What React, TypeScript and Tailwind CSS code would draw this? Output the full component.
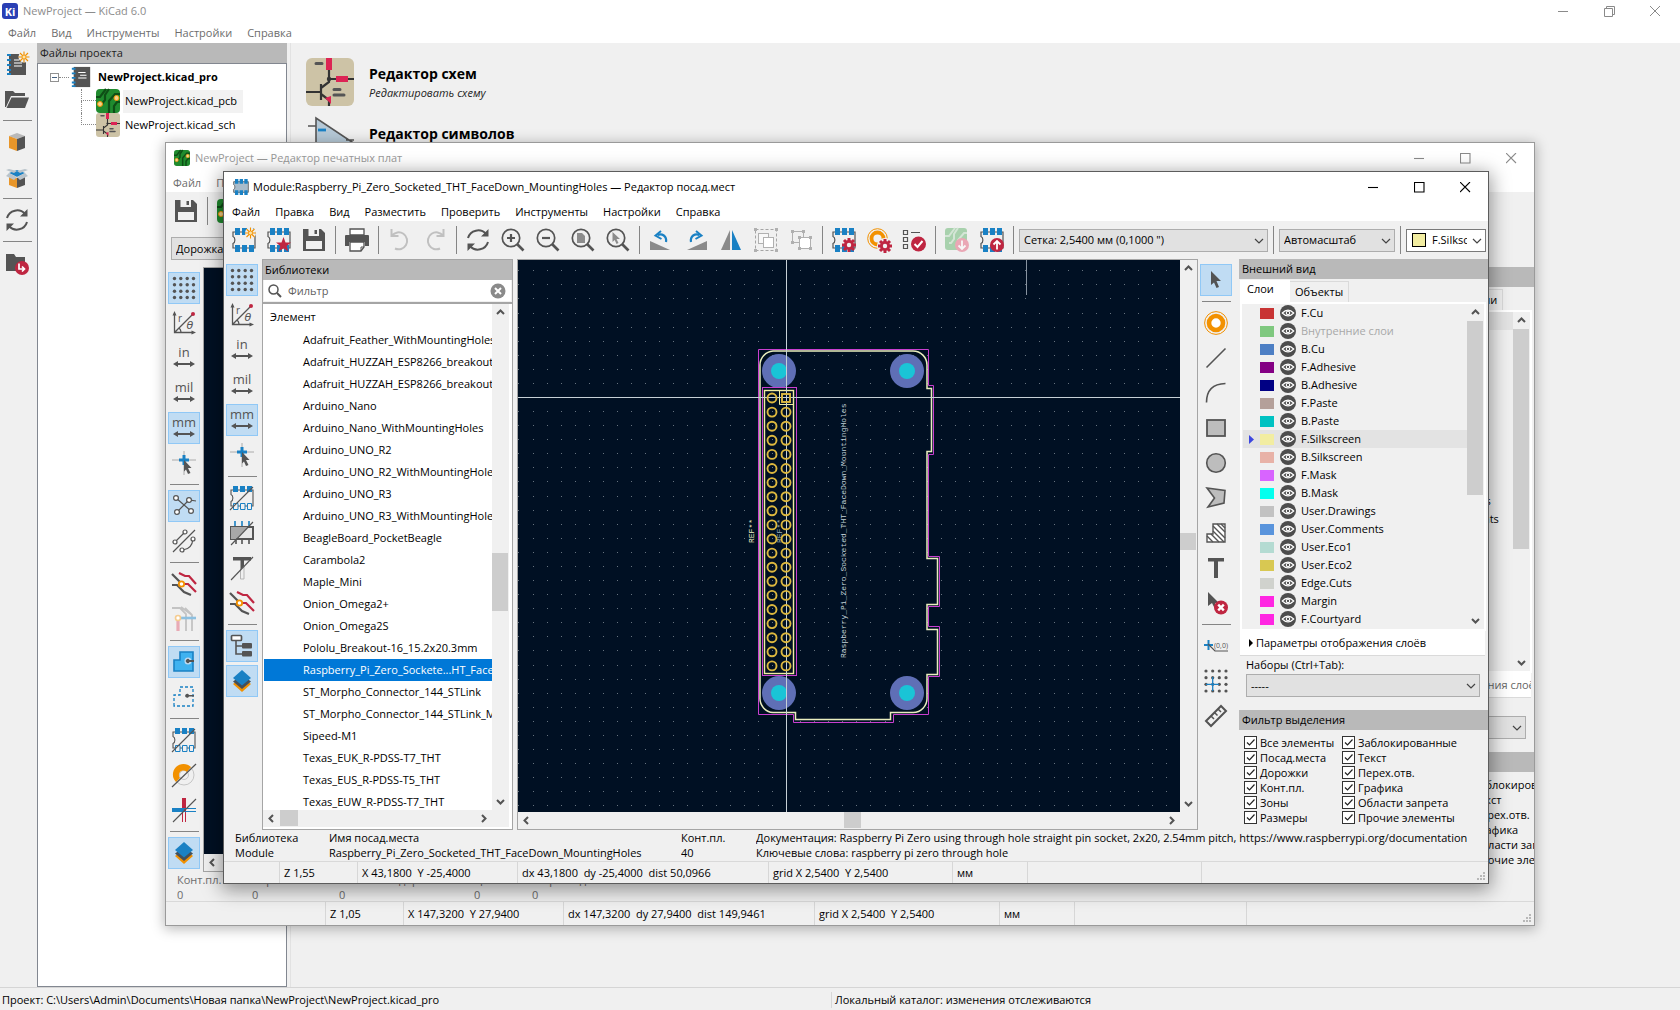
import { useId, type ReactNode } from 'react';

const D = '#545454';
const B = '#1a81c4';
const R = '#bf2641';
const O = '#f29100';

/* ---------- icons ---------- */

function Ico({ children, size = 24 }: { children: ReactNode; size?: number }) {
  return (
    <svg width={size} height={size} viewBox="0 0 24 24" fill="none" className="shrink-0 overflow-visible" aria-hidden="true">
      {children}
    </svg>
  );
}

function Pads({ body = 'none' }: { body?: string }) {
  return (
    <>
      <path d="M1 4V8.500C3.500 9.500 3.500 14.500 1 15.500V20H23V4Z" fill={body} stroke={D} strokeWidth="1.2" />
      <path d="M3 0h5v7h-5zM10 0h5v7h-5zM17 0h5v7h-5zM3 17h5v7h-5zM10 17h5v7h-5zM17 17h5v7h-5z" fill={B} />
    </>
  );
}

function Gear({ x, y }: { x: number; y: number }) {
  return (
    <g transform={`translate(${x} ${y})`}>
      <path d="M0-7V7M-7 0H7M-5-5L5 5M5-5L-5 5" stroke={R} strokeWidth="3" />
      <circle r="5" fill={R} />
      <circle r="2.200" fill="#f0f0f0" />
    </g>
  );
}

function Spark({ x, y }: { x: number; y: number }) {
  return (
    <g transform={`translate(${x} ${y})`}>
      <circle r="5.500" fill="#f0f0f0" />
      <path d="M0-5.500V5.500M-5.500 0H5.500M-4-4L4 4M4-4L-4 4" stroke={O} strokeWidth="1.100" />
      <circle r="2" fill="#fbe3a8" stroke={O} strokeWidth=".8" />
    </g>
  );
}

const KiLogo = () => (
  <span className="flex h-4 w-4 items-center justify-center rounded-[3px] bg-[#2a3fb4] text-[11px] font-bold leading-none text-white">Ki</span>
);

const PcbArt = ({ size = 24 }: { size?: number }) => (
  <Ico size={size}>
    <rect width="24" height="24" rx="4" fill="#208b2e" />
    <path d="M0 8H4L10 0M24 5H19L13 12V24M24 13H21L18 17V24M4 15H6L9 11V6L13 0" stroke="#0e4f16" strokeWidth="2.200" />
    <circle cx="4" cy="15" r="2.500" fill="#f5d48c" stroke={O} />
    <circle cx="20.500" cy="9" r="2.500" fill="#f5d48c" stroke={O} />
  </Ico>
);

const SchArt = ({ size = 24 }: { size?: number }) => (
  <Ico size={size}>
    <rect width="24" height="24" rx="3" fill="#cdc3a6" />
    <path d="M11.500 6V12L7.500 15M0 17H7M7.500 13V21M7.500 18L11.500 21V24M11.500 10.500H24" stroke="#333" strokeWidth="1.100" />
    <circle cx="11.500" cy="10.500" r="1.100" fill="#333" />
    <path d="M10 0h3v6h-3zM15 9h6v3h-6z" fill="#dc2454" />
    <path d="M9.500 20l3-1v4z" fill="#dc2454" />
    <path d="M5 2.800h3M14 15.800h3M14 18.500h5" stroke="#555" strokeWidth="1.500" strokeLinecap="round" />
  </Ico>
);

const SymArt = () => (
  <Ico size={48}>
    <path d="M1 4H5M5 0V24L23 12ZM20 11H24" stroke={D} fill="#b5c8d6" strokeWidth=".8" />
    <path d="M6 6H10" stroke={B} strokeWidth="1.400" />
  </Ico>
);

const Notebook = ({ size = 24 }: { size?: number }) => (
  <Ico size={size}>
    <rect x="4" y="1" width="18" height="22" fill={D} />
    <path d="M9 7H17M11 10H18M9 13H18" stroke="#fff" strokeWidth="1.100" />
    <path d="M2 3H6M2 8H6M2 13H6M2 18H6M2 22H6" stroke={B} strokeWidth="2" />
  </Ico>
);

const I: Record<string, ReactNode> = {
  newProject: (
    <>
      <rect x="4" y="2" width="17" height="21" fill={D} />
      <path d="M9 8H14M9 11H17M9 14H17" stroke="#fff" strokeWidth="1.100" />
      <path d="M2 3H6M2 8H6M2 13H6M2 18H6M2 22H6" stroke={B} strokeWidth="2" />
      <Spark x={19} y={5} />
    </>
  ),
  open: (
    <>
      <path d="M0 20V4H8L10 6H20V9H6L1 20Z" fill={D} />
      <path d="M1.500 21L6.500 10.500H24L20 21Z" fill={D} />
    </>
  ),
  box: (
    <>
      <path d="M12 3L20 6L12 9L4 6Z" fill="#b9b9b9" />
      <path d="M4 6L12 9V21L4 18Z" fill="#e8962a" />
      <path d="M20 6L12 9V21L20 18Z" fill={D} />
    </>
  ),
  openBox: (
    <>
      <path d="M4 10L12 13V23L4 20Z" fill="#e8962a" />
      <path d="M20 10L12 13V23L20 20Z" fill={D} />
      <path d="M12 5L20 8L12 12L4 8Z" fill={B} />
      <path d="M4 4L12 6L9 8L1 5ZM20 4L12 6L15 8L23 5ZM4 8L12 12L9 15L1 11ZM20 8L12 12L15 15L23 11Z" fill="#b9c3ca" />
    </>
  ),
  refresh: (
    <>
      <path d="M2 10A10.500 10.500 0 0 1 20 6M22 14A10.500 10.500 0 0 1 4 18" stroke={D} strokeWidth="2" />
      <path d="M22.500 1V8.500H15ZM1.500 23V15.500H9Z" fill={D} />
    </>
  ),
  folderRed: (
    <>
      <path d="M1 3H9L11 6H20V20H1Z" fill={D} />
      <circle cx="17" cy="17" r="7" fill={R} />
      <path d="M14 12.500V18H19M17 15.500L19.500 18L17 20.500" stroke="#fff" strokeWidth="1.700" />
    </>
  ),
  save: (
    <>
      <path d="M1 1H19L23 5V23H1Z" fill={D} />
      <path d="M6.500 1H17V8H6.500ZM4 13H20V21H4Z" fill="#f0f0f0" />
      <path d="M12.500 2H15V6H12.500Z" fill={D} />
    </>
  ),
  newFp: (<><Pads /><Spark x={18.500} y={5} /></>),
  starFp: (
    <>
      <Pads />
      <path d="M16.500 9L18.500 14.500H24L19.700 18L21.300 23.500L16.500 20.200L11.700 23.500L13.300 18L9 14.500H14.500Z" fill={R} />
    </>
  ),
  print: (
    <>
      <path d="M5 1H19V7H5Z" stroke={D} fill="#fff" strokeWidth="1.300" />
      <path d="M1 7H23Q24 7 24 8V18H20V14H4V18H0V8Q0 7 1 7Z" fill={D} />
      <path d="M5 14H19V19L16 23H5Z" stroke={D} fill="#fff" strokeWidth="1.300" />
      <path d="M19 19H16V23" stroke={D} />
    </>
  ),
  undo: (<path d="M3.500 1V8H10.500M4 7.500A8.500 8.500 0 1 1 7 20.500" stroke="#c0c0c0" strokeWidth="2" />),
  redo: (<path d="M20.500 1V8H13.500M20 7.500A8.500 8.500 0 1 0 17 20.500" stroke="#c0c0c0" strokeWidth="2" />),
  zoomIn: (
    <>
      <circle cx="10" cy="10" r="8.700" stroke={D} strokeWidth="1.700" />
      <path d="M16 16L22.500 22.500" stroke={D} strokeWidth="2.600" />
      <path d="M10 6V14M6 10H14" stroke={D} strokeWidth="2.200" />
    </>
  ),
  zoomOut: (
    <>
      <circle cx="10" cy="10" r="8.700" stroke={D} strokeWidth="1.700" />
      <path d="M16 16L22.500 22.500" stroke={D} strokeWidth="2.600" />
      <path d="M6 10H14" stroke={D} strokeWidth="2.200" />
    </>
  ),
  zoomPage: (
    <>
      <circle cx="10" cy="10" r="8.700" stroke={D} strokeWidth="1.700" />
      <path d="M16 16L22.500 22.500" stroke={D} strokeWidth="2.600" />
      <path d="M6 5H11L14 8V15H6Z" fill="#8c8c8c" />
    </>
  ),
  zoomSel: (
    <>
      <circle cx="10" cy="10" r="8.700" stroke={D} strokeWidth="1.700" />
      <path d="M16 16L22.500 22.500" stroke={D} strokeWidth="2.600" />
      <path d="M6.500 4L14 11H10.500L12.500 15L10.500 16L8.700 12L6.500 14Z" fill="#8c8c8c" />
    </>
  ),
  rotL: (
    <>
      <path d="M1 13V22H21Z" fill="#8a8a8a" />
      <path d="M17 14C18 8 13 5 8.500 7" stroke={B} strokeWidth="2.200" />
      <path d="M12 3L6.500 7.500L12.500 11" stroke={B} strokeWidth="2" />
    </>
  ),
  rotR: (
    <>
      <path d="M23 13V22H3Z" fill="#8a8a8a" />
      <path d="M7 14C6 8 11 5 15.500 7" stroke={B} strokeWidth="2.200" />
      <path d="M12 3L17.500 7.500L11.500 11" stroke={B} strokeWidth="2" />
    </>
  ),
  mirror: (<><path d="M11 2V22H2Z" fill="#8a8a8a" /><path d="M13 2V22H22Z" fill={B} /></>),
  group: (
    <>
      <rect x="1.500" y="1.500" width="21" height="21" stroke="#a5a5a5" strokeDasharray="3 2" />
      <path d="M0 0h3v3h-3zM21 0h3v3h-3zM0 21h3v3h-3zM21 21h3v3h-3z" fill="#b0b0b0" />
      <rect x="4.500" y="5.500" width="10" height="10" fill="#f8f8f8" stroke="#b0b0b0" />
      <rect x="9.500" y="9.500" width="10" height="10" fill="#fff" stroke="#b0b0b0" />
    </>
  ),
  ungroup: (
    <>
      <rect x="3.500" y="3.500" width="11" height="11" stroke="#b0b0b0" />
      <rect x="10.500" y="9.500" width="11" height="11" fill="#fff" stroke="#b0b0b0" />
      <path d="M2 2h3v3h-3zM13 2h3v3h-3zM2 13h3v3h-3zM9 8h3v3h-3zM20 8h3v3h-3zM9 19h3v3h-3zM20 19h3v3h-3z" fill="#b0b0b0" />
    </>
  ),
  fpGear: (<><Pads /><Gear x={17} y={17} /></>),
  padGear: (
    <>
      <circle cx="10.500" cy="10.500" r="9.800" stroke={O} strokeWidth="1" />
      <circle cx="10.500" cy="10.500" r="6" stroke={O} strokeWidth="3.800" />
      <circle cx="18" cy="18" r="8" fill="#f0f0f0" />
      <Gear x={18} y={18} />
    </>
  ),
  check: (
    <>
      <path d="M1.500 2.500h4v4h-4zM1.500 9.500h4v4h-4zM1.500 16.500h4v4h-4zM9 4.500H18" stroke={D} strokeWidth="1.200" />
      <circle cx="16.500" cy="16" r="7.500" fill={R} />
      <path d="M12.500 16L15.500 19L20.500 13" stroke="#fff" strokeWidth="2" />
    </>
  ),
  pcbDown: (
    <g opacity=".5">
      <rect width="22" height="22" rx="3" fill="#62b36c" />
      <path d="M0 8H4L10 0M22 5H19L13 12V22M4 15H6L9 11V6L13 0" stroke="#b9dcbd" strokeWidth="2" />
      <circle cx="17" cy="17" r="7" fill="#e5617b" />
      <path d="M17 12.500V20.500M13.500 17.500L17 21L20.500 17.500" stroke="#fff" strokeWidth="1.800" />
    </g>
  ),
  fpUp: (
    <>
      <Pads />
      <circle cx="17" cy="17" r="7" fill={R} />
      <path d="M17 21.500V13.500M13.500 16.500L17 13L20.500 16.500" stroke="#fff" strokeWidth="1.800" />
    </>
  ),
  grid: (
    <>
      {[2.500, 8.800, 15.200, 21.500].flatMap((y) => [2.500, 8.800, 15.200, 21.500].map((x) => <circle key={`${x}-${y}`} cx={x} cy={y} r="1.700" fill={D} />))}
    </>
  ),
  polar: (
    <>
      <path d="M2.500 4V21.500H20M2.500 21.500L20.500 3.500M7 17A6 6 0 0 1 9 21" stroke={D} strokeWidth="1.300" />
      <path d="M2.500 0L4.500 4.500H.5ZM24 21.500L19.500 19.500V23.500Z" fill={D} />
      <circle cx="21" cy="3" r="2" fill={R} />
      <text x="6" y="11" fontSize="10" fill={D} fontFamily="Open Sans, sans-serif">r</text>
      <text x="14.500" y="18" fontSize="11" fontStyle="italic" fill={D} fontFamily="DejaVu Sans, sans-serif">θ</text>
    </>
  ),
  cursor: (
    <>
      <path d="M0 9H24M12 0V24" stroke="#9a9a9a" strokeWidth=".8" />
      <path d="M12 4V14M7 9H17" stroke={B} strokeWidth="3" />
      <path d="M12 9L19.500 17H16L18.500 22L16 23L14 18.500L12 20.500Z" fill={D} />
    </>
  ),
  fpSketch: (
    <>
      <path d="M1 4V8.500C3.500 9.500 3.500 14.500 1 15.500V20H23V4Z" stroke={D} strokeWidth="1.100" />
      <path d="M3 0h5v6h-5zM10 0h5v6h-5zM17 0h5v6h-5z" fill={B} />
      <path d="M3.500 17.500h4.500v6h-4.500zM10.500 17.500h4.500v6h-4.500zM17.500 17.500h4v6h-4z" fill="#f0f0f0" stroke={B} />
      <path d="M0 24L23 1" stroke={D} strokeWidth="1.100" />
    </>
  ),
  chipSketch: (
    <>
      <rect x="1" y="6" width="22" height="12" fill="#e8e8e8" stroke={D} strokeWidth="2" />
      <path d="M1 6H18L6 18H1Z" fill="#a8a8a8" />
      <path d="M5 0V5M12 0V5M19 0V5" stroke={B} strokeWidth="1.600" />
      <path d="M6 18V23M12 18V23M19 18V23" stroke={D} strokeWidth="1.600" />
      <path d="M1 24L23 1" stroke={D} strokeWidth="1.100" />
    </>
  ),
  textSketch: (
    <>
      <path d="M3 1H21V4.500H14V10L10.500 14V4.500H3Z" fill={D} />
      <path d="M10.500 14V23H14V10" stroke="#b5b5b5" />
      <path d="M1 24L23 1" stroke={D} strokeWidth="1.100" />
    </>
  ),
  tracks: (
    <>
      <path d="M7 1L13 4H17L24 12" stroke={R} strokeWidth="2.200" />
      <path d="M11 12H16L24 20" stroke={R} strokeWidth="2.200" />
      <path d="M0 2L8 10M0 13H5L12 20L19 23" stroke={D} strokeWidth="2.200" />
      <circle cx="9.500" cy="12" r="2.700" fill="#fff" stroke={O} strokeWidth="1.800" />
    </>
  ),
  tracksFaded: (
    <>
      <path d="M0 1H8L14 7V24M9 0L20 8V24M13 1L20 8" stroke="#c3c3c3" strokeWidth="1.800" />
      <path d="M6 11V24" stroke="#e8aab5" strokeWidth="3.200" />
      <path d="M6 11H24" stroke="#8dc0e0" strokeWidth="2.600" />
      <circle cx="6" cy="11" r="2.500" fill="#fff" stroke="#f5cc90" strokeWidth="1.600" />
    </>
  ),
  tree: (
    <>
      <path d="M6 7V20H13M6 12H13" stroke={D} strokeWidth="1.600" />
      <rect x="1.500" y="1.500" width="10" height="5" rx="1" fill="#fff" stroke={D} strokeWidth="1.700" />
      <rect x="12" y="9" width="10" height="5.500" rx="1" fill={D} />
      <rect x="12" y="17" width="10" height="5.500" rx="1" fill={D} />
    </>
  ),
  layers: (
    <>
      <path d="M12 8L21 15L12 23L3 15Z" fill={O} />
      <path d="M12 6L21 12.500L12 20L3 12.500Z" fill="#44505a" />
      <path d="M12 1L21 9L12 16.500L3 9Z" fill={B} />
    </>
  ),
  ratsnest: (
    <>
      <path d="M4 4L19 17M5 18L17 6L24 7" stroke={D} strokeWidth="1.200" />
      <g fill="#fff" stroke={D} strokeWidth="1.200">
        <circle cx="4" cy="4" r="2.400" /><circle cx="17" cy="6" r="2.400" /><circle cx="5" cy="18" r="2.400" /><circle cx="19" cy="17" r="2.400" />
      </g>
    </>
  ),
  ratCurved: (
    <>
      <path d="M3 13L13 3M21 10Q20 20 11 21M1 23L23 1" stroke={D} strokeWidth="1.200" />
      <g fill="#fff" stroke={D} strokeWidth="1.200">
        <circle cx="3" cy="13" r="2" /><circle cx="13" cy="3" r="2" /><circle cx="21" cy="10" r="2" /><circle cx="10" cy="21" r="2" />
      </g>
    </>
  ),
  zoneFill: (
    <>
      <path d="M2 21V10H8V2H21V21Z" fill="#3fb2f0" stroke={B} strokeWidth="1.600" />
      <circle cx="16" cy="11" r="3.500" fill="#c0dcf3" />
      <path d="M22 10H17.500A2 2 0 1 0 17.500 12H22Z" fill={D} />
    </>
  ),
  zoneOutline: (
    <>
      <path d="M2 21V10H8V2H21V21Z" stroke={B} strokeWidth="1.300" strokeDasharray="3 2" />
      <path d="M22 10H17A2 2 0 1 0 17 11.500H22Z" fill={D} />
    </>
  ),
  padSketch: (
    <>
      <circle cx="12" cy="12" r="10" stroke="#c6c6c6" /><circle cx="12" cy="12" r="4.500" stroke="#c6c6c6" />
      <path d="M4 19A10.500 10.500 0 1 1 19 4L15 9A4.500 4.500 0 1 0 8 15Z" fill={O} />
      <path d="M0 24L24 1" stroke={D} strokeWidth="1.200" />
    </>
  ),
  crossTracks: (
    <>
      <path d="M12 0V14" stroke={R} strokeWidth="4" /><path d="M10.500 14V24M13.500 12V24" stroke={R} />
      <path d="M0 12H12" stroke={B} strokeWidth="4" /><path d="M12 10.500H24M12 13.500H24" stroke={B} />
      <path d="M1 24L24 1" stroke={D} strokeWidth="1.100" />
    </>
  ),
  arrow: (<path d="M7 3L17 13H12.500L15 19L12.500 20L10 14.500L7 17Z" fill={D} />),
  pad: (
    <>
      <circle cx="12" cy="12" r="11.400" stroke={O} strokeWidth="1" />
      <circle cx="12" cy="12" r="7" fill="#fff" stroke={O} strokeWidth="4.600" />
    </>
  ),
  line: (<path d="M2.500 21.500L21.500 2.500" stroke={D} strokeWidth="1.600" />),
  arc: (<path d="M2.500 21.500Q2.500 3 21.500 2.500" stroke={D} strokeWidth="1.600" />),
  rect: (<rect x="3" y="4" width="18" height="16" fill="#bdbdbd" stroke={D} strokeWidth="1.800" />),
  circle: (<circle cx="12" cy="12" r="9.300" fill="#bdbdbd" stroke={D} strokeWidth="1.600" />),
  poly: (<path d="M3 2L21 4.500L20 17L4 21L10.500 12Z" fill="#bdbdbd" stroke={D} strokeWidth="1.600" />),
  hatch: (
    <>
      <path d="M3 21V13H9V3H21V21Z" fill="#fff" stroke={D} strokeWidth="1.400" />
      <path d="M9 5L21 17M9 10L20 21M13 3L21 11M17 3L21 7M3 15L9 21M7 13L15 21" stroke={D} strokeWidth="1.400" />
    </>
  ),
  text: (<path d="M4 2H20V5.500H14V22H10V5.500H4Z" fill={D} />),
  del: (
    <>
      <path d="M4 1L15 12H11L12.500 18L10 16L8 12L4 15Z" fill={D} />
      <circle cx="17" cy="16.500" r="7" fill={R} />
      <path d="M14.200 13.700L19.800 19.300M19.800 13.700L14.200 19.300" stroke="#fff" strokeWidth="2.400" />
    </>
  ),
  origin: (
    <>
      <path d="M0 11H9M4.500 6V16" stroke={B} strokeWidth="2" />
      <path d="M4 10L11 17H24" stroke={D} strokeWidth="1.200" />
      <text x="10" y="14" fontSize="7" fill={D} fontFamily="Open Sans, sans-serif">(0,0)</text>
    </>
  ),
  gridOrigin: (
    <>
      {[2, 8.700, 15.300, 22].flatMap((y) => [2, 8.700, 15.300, 22].map((x) => <circle key={`${x}-${y}`} cx={x} cy={y} r="1.600" fill={D} />))}
      <path d="M2 15.300H15M8.700 8V22" stroke={B} strokeWidth="1.300" />
    </>
  ),
  ruler: (
    <>
      <path d="M2 17L17 2L22 7L7 22Z" stroke={D} strokeWidth="2" />
      <path d="M7 12L10 15M10.500 8.500L13.500 11.500M14 5L17 8" stroke={D} strokeWidth="1.500" />
    </>
  ),
};

function Unit({ text }: { text: string }) {
  return (
    <Ico>
      <text x="12" y="11" fontSize="13" textAnchor="middle" fill={D} fontFamily="Open Sans, sans-serif">{text}</text>
      <path d="M5 18H19" stroke={D} strokeWidth="2" />
      <path d="M1 18L6 15V21ZM23 18L18 15V21Z" fill={D} />
    </Ico>
  );
}

const Chevron = ({ className = '' }: { className?: string }) => (
  <svg width="10" height="6" viewBox="0 0 10 6" fill="none" className={className} aria-hidden="true">
    <path d="M1 1L5 5L9 1" stroke="#444" strokeWidth="1.200" />
  </svg>
);

/* ---------- shared controls ---------- */

function Tool({ name, active }: { name: string; active?: boolean }) {
  const unit = name.startsWith('u:');
  return (
    <button
      type="button"
      aria-label={unit ? name.slice(2) : name}
      aria-pressed={active}
      className={`flex h-8 w-8 shrink-0 items-center justify-center border ${active ? 'border-[#90c8f6] bg-[#c0dcf3]' : 'border-transparent'}`}
    >
      {unit ? <Unit text={name.slice(2)} /> : name === 'pcb' ? <PcbArt /> : <Ico>{I[name]}</Ico>}
    </button>
  );
}

function VTools({ items, active = [], className = 'pl-0.5' }: { items: string[]; active?: string[]; className?: string }) {
  return (
    <div role="toolbar" aria-orientation="vertical" className={`flex flex-col gap-[3px] pt-[5px] ${className}`}>
      {items.map((n, i) =>
        n === '|' ? (
          <div key={i} className="flex h-[5px] w-8 shrink-0 items-center justify-center"><div className="h-px w-[29px] bg-[#858585]" /></div>
        ) : (
          <Tool key={i} name={n} active={active.includes(n)} />
        ),
      )}
    </div>
  );
}

function HTools({ items }: { items: string[] }) {
  return (
    <>
      {items.map((n, i) =>
        n === '|' ? (
          <div key={i} className="flex h-7 w-[5px] shrink-0 justify-center"><div className="w-px bg-[#858585]" /></div>
        ) : (
          <Tool key={i} name={n} />
        ),
      )}
    </>
  );
}

function Select({ label, value, swatch, className }: { label: string; value: string; swatch?: boolean; className: string }) {
  return (
    <div className={`relative ${className}`}>
      <select
        aria-label={label}
        className={`h-full w-full appearance-none rounded-none border text-black outline-none ${swatch ? 'border-[#7a7a7a] bg-white pl-[25px] pr-[18px]' : 'border-[#adadad] bg-[#e1e1e1] pl-1 pr-5'}`}
      >
        <option>{value}</option>
      </select>
      {swatch && <span className="absolute left-[6px] top-1 h-[14px] w-[14px] border border-black bg-[#f2eda1]" />}
      <Chevron className="pointer-events-none absolute right-1 top-[9px]" />
    </div>
  );
}

function ArrowBtn({ dir }: { dir: 'up' | 'down' | 'left' | 'right' }) {
  const d = { up: 'M2 7L5.500 3.500L9 7', down: 'M2 4L5.500 7.500L9 4', left: 'M7 2L3.500 5.500L7 9', right: 'M4 2L7.500 5.500L4 9' }[dir];
  return (
    <button type="button" aria-label={dir} className="flex h-[17px] w-[17px] shrink-0 items-center justify-center">
      <svg width="11" height="11" viewBox="0 0 11 11" fill="none"><path d={d} stroke={D} strokeWidth="2" /></svg>
    </button>
  );
}

function VScroll({ thumb }: { thumb: string }) {
  return (
    <div className="flex w-[17px] shrink-0 flex-col bg-[#f0f0f0]">
      <ArrowBtn dir="up" />
      <div className="min-h-0 flex-1"><div className={`w-4 bg-[#cdcdcd] ${thumb}`} /></div>
      <ArrowBtn dir="down" />
    </div>
  );
}

function HScroll({ thumb }: { thumb: string }) {
  return (
    <div className="flex h-[17px] shrink-0 bg-[#f0f0f0] pr-[17px]">
      <ArrowBtn dir="left" />
      <div className="min-w-0 flex-1"><div className={`h-4 bg-[#cdcdcd] ${thumb}`} /></div>
      <ArrowBtn dir="right" />
    </div>
  );
}

function WindowButtons({ color, className = '' }: { color: string; className?: string }) {
  return (
    <div className={`flex ${className}`}>
      {[
        ['Свернуть', 'M0 5.500H10'],
        ['Развернуть', 'M.5.500H10V10H.5Z'],
        ['Закрыть', 'M0 0L10 10M10 0L0 10'],
      ].map(([l, d]) => (
        <button key={l} type="button" aria-label={l} className="flex w-[46px] items-center justify-center">
          <svg width="11" height="11" viewBox="0 0 11 11" fill="none"><path d={d} stroke={color} strokeWidth="1.100" /></svg>
        </button>
      ))}
    </div>
  );
}

function MenuBar({ items, className }: { items: string[]; className: string }) {
  return (
    <nav className={`flex items-center gap-[15px] bg-white ${className}`}>
      {items.map((m) => <button key={m} type="button" className="whitespace-nowrap">{m}</button>)}
    </nav>
  );
}

function StatusBar({ cells, className }: { cells: [string, string][]; className: string }) {
  return (
    <div className={`flex shrink-0 border-t border-[#d9d9d9] bg-[#f0f0f0] ${className}`}>
      {cells.map(([w, t], i) => (
        <div key={i} className={`flex items-center whitespace-pre border-r pl-1 ${i === cells.length - 1 ? 'border-transparent' : 'border-[#d7d7d7]'} ${w}`}>{t}</div>
      ))}
      <svg width="9" height="9" viewBox="0 0 9 9" className="mb-0.5 ml-auto mr-0.5 self-end" aria-hidden="true">
        <path d="M6 0h2v2h-2zM3 3h2v2h-2zM6 3h2v2h-2zM0 6h2v2h-2zM3 6h2v2h-2zM6 6h2v2h-2z" fill="#b8b8b8" />
      </svg>
    </div>
  );
}

/* ---------- appearance panel ---------- */

const LAYERS: [string, string][] = [
  ['F.Cu', 'bg-[#c83434]'],
  ['Внутренние слои', 'bg-[#7fc87f]'],
  ['B.Cu', 'bg-[#4d7fc4]'],
  ['F.Adhesive', 'bg-[#840084]'],
  ['B.Adhesive', 'bg-[#000084]'],
  ['F.Paste', 'bg-[#b4a09a]'],
  ['B.Paste', 'bg-[#00c2c2]'],
  ['F.Silkscreen', 'bg-[#f2eda1]'],
  ['B.Silkscreen', 'bg-[#e8b2a7]'],
  ['F.Mask', 'bg-[#d864ff]'],
  ['B.Mask', 'bg-[#02ffee]'],
  ['User.Drawings', 'bg-[#c2c2c2]'],
  ['User.Comments', 'bg-[#5994dc]'],
  ['User.Eco1', 'bg-[#b4dbd2]'],
  ['User.Eco2', 'bg-[#d8c852]'],
  ['Edge.Cuts', 'bg-[#d0d2cd]'],
  ['Margin', 'bg-[#ff26e2]'],
  ['F.Courtyard', 'bg-[#ff26e2]'],
  ['B.Courtyard', 'bg-[#26e9ff]'],
];

const FILTERS = [
  ['Все элементы', 'Заблокированные'],
  ['Посад.места', 'Текст'],
  ['Дорожки', 'Перех.отв.'],
  ['Конт.пл.', 'Графика'],
  ['Зоны', 'Области запрета'],
  ['Размеры', 'Прочие элементы'],
];

function Check({ label }: { label: string }) {
  const id = useId();
  return (
    <div className="flex h-[15px] shrink-0 items-center gap-[3px] whitespace-nowrap">
      <span className="relative h-[13px] w-[13px]">
        <input id={id} type="checkbox" defaultChecked className="block h-[13px] w-[13px] appearance-none border border-[#333] bg-white" />
        <svg width="13" height="13" viewBox="0 0 13 13" fill="none" className="pointer-events-none absolute left-0 top-0"><path d="M3 6.500L5.500 9L10.500 3.500" stroke="#222" strokeWidth="1.200" /></svg>
      </span>
      <label htmlFor={id}>{label}</label>
    </div>
  );
}

function Appearance({ board, selected, thumb, className }: { board?: boolean; selected: string; thumb: string; className: string }) {
  const tabs = board ? ['Объекты', 'Цепи'] : ['Объекты'];
  return (
    <aside className={`flex shrink-0 flex-col overflow-hidden bg-[#f0f0f0] text-[11px] text-black ${className}`}>
      <h2 className="flex h-5 shrink-0 items-center bg-[#b9b9b9] pl-[3px]">Внешний вид</h2>
      <div role="tablist" className="mt-px flex h-[22px] shrink-0 pl-px">
        <button type="button" role="tab" aria-selected className="w-[50px] bg-white pb-1 pl-[7px] text-left">Слои</button>
        {tabs.map((t) => (
          <button key={t} type="button" role="tab" aria-selected={false} className="mt-px border-r border-t border-[#dadada] px-[5px]">{t}</button>
        ))}
      </div>
      <div className="mx-px mr-[2px] flex min-h-0 flex-1 border-2 border-white">
        <ul className="min-w-0 flex-1 overflow-hidden pl-px">
          {LAYERS.filter(([n]) => !board || n !== 'Внутренние слои').map(([n, c]) => (
            <li key={n} className={`flex h-[18px] items-center ${n === selected ? 'bg-[#e3e3e3]' : ''}`}>
              <span className="flex w-[17px] shrink-0 justify-center">
                {n === selected && <svg width="5" height="9" viewBox="0 0 5 9"><path d="M0 0L5 4.500L0 9Z" fill="#3c46e0" /></svg>}
              </span>
              <span className={`h-[11px] w-[14px] shrink-0 ${c}`} />
              <button type="button" aria-label={`Видимость ${n}`} className="ml-1.5 mr-[5px] shrink-0">
                <svg width="16" height="16" viewBox="0 0 16 16" fill="none">
                  <circle cx="8" cy="8" r="8" fill="#4d4d4d" />
                  <path d="M2.300 8Q8 2.200 13.700 8Q8 13.800 2.300 8Z" fill="#4d4d4d" stroke="#fff" strokeWidth="1.200" />
                  <circle cx="8" cy="8" r="1.700" stroke="#fff" strokeWidth="1.100" />
                </svg>
              </button>
              <span className={`whitespace-nowrap ${n === 'Внутренние слои' ? 'text-[#a8a8a8]' : ''}`}>{n}</span>
            </li>
          ))}
        </ul>
        <VScroll thumb={thumb} />
      </div>
      <button type="button" className="mx-px mr-[3px] flex h-[25px] shrink-0 items-center gap-[3px] overflow-hidden whitespace-nowrap border-b border-[#dadada] bg-white pl-[9px]">
        <svg width="4" height="8" viewBox="0 0 4 8" className="shrink-0"><path d="M0 0L4 4L0 8Z" fill="#000" /></svg>
        <span className={board ? 'text-[#666]' : ''}>Параметры отображения слоёв</span>
      </button>
      <p className="flex h-[18px] shrink-0 items-center pl-[7px]">Наборы (Ctrl+Tab):</p>
      <Select label="Наборы (Ctrl+Tab):" value="-----" className="mb-[13px] ml-[7px] mr-2 h-[23px] shrink-0" />
      <h2 className="flex h-5 shrink-0 items-center bg-[#b9b9b9] pl-[3px]">Фильтр выделения</h2>
      <div className="flex gap-2 pb-[5px] pl-[5px] pt-[5px]">
        <div className="w-[90px] shrink-0">{FILTERS.map(([a]) => <Check key={a} label={a} />)}</div>
        <div>{FILTERS.map(([, b]) => <Check key={b} label={b} />)}</div>
      </div>
    </aside>
  );
}

/* ---------- footprint canvas ---------- */

function FootprintCanvas() {
  const dots: string[] = [];
  for (let j = -9; j <= 29; j++) {
    for (let i = -19; i <= 28; i++) {
      dots.push(`M${Math.round(786 + i * 14.08)} ${Math.round(397 + j * 14.08)}h1v1h-1z`);
    }
  }
  const pins = Array.from({ length: 20 }, (_, i) => 398 + i * 14.1);
  return (
    <svg className="h-full w-full bg-[#001023]" fill="none" aria-label="Raspberry_Pi_Zero_Socketed_THT_FaceDown_MountingHoles">
      <g transform="translate(-518 -260)">
        <path d={dots.join('')} fill="#66737f" />
        <path d="M1026.500 260V295" stroke="#8793a0" />
        {[[779, 371], [907, 371], [779, 693], [907, 693]].map(([x, y]) => (
          <g key={`${x}-${y}`}>
            <circle cx={x} cy={y} r="17" fill="#5f6fb6" />
            <circle cx={x} cy={y} r="8" fill="#1ac4d6" />
          </g>
        ))}
        <path
          d="M758.500 349.500H928.500V385.500H933.500V454.500H928.500V556.500H939.500V606.500H928.500V626.500H939.500V676.500H928.500V714.500H893.500V722.500H793.500V714.500H758.500Z"
          stroke="#c93fd0"
        />
        <path
          d="M773 351H913A14 14 0 0 1 927 365V388.500H931.500V451.500H927V558.500H937.500V604.500H927V629.500H937.500V674.500H927V698A14 14 0 0 1 913 712.500H890.500V719.500H795.500V712.500H773A14 14 0 0 1 760 698V365A14 14 0 0 1 773 351Z"
          stroke="#e9eebf"
          strokeWidth="1.500"
        />
        <rect x="762.500" y="387.500" width="34" height="288" stroke="#c93fd0" />
        <rect x="764.500" y="390.500" width="29" height="283" stroke="#f2eda1" strokeWidth="1.400" />
        <path d="M779.500 390.500V404.500H793.500" stroke="#f2eda1" />
        <text transform="translate(782 543) rotate(-90)" fontSize="8" fill="#9fb0ba" fontFamily="Liberation Mono, monospace">REF**</text>
        <path d="M517 397.500H1181M786.500 260V813" stroke="#c6d0d6" />
        {pins.map((y, i) => (
          <g key={y} stroke="#dcb83f" strokeWidth="1.900">
            <circle cx="772" cy={y} r="4.500" />
            {i === 0 ? <rect x="782" y="394" width="8" height="8" /> : <circle cx="786" cy={y} r="4.500" />}
          </g>
        ))}
        <text transform="translate(754 543) rotate(-90)" fontSize="8" fill="#f8f8cc" fontFamily="Liberation Mono, monospace">REF**</text>
        <text transform="translate(846 658) rotate(-90)" fontSize="8" fill="#c3d2d9" fontFamily="Liberation Mono, monospace">
          Raspberry_Pi_Zero_Socketed_THT_FaceDown_MountingHoles
        </text>
      </g>
    </svg>
  );
}

/* ---------- windows ---------- */

const FOOTPRINTS = [
  'Adafruit_Feather_WithMountingHoles', 'Adafruit_HUZZAH_ESP8266_breakout', 'Adafruit_HUZZAH_ESP8266_breakout_WithMountingHoles',
  'Arduino_Nano', 'Arduino_Nano_WithMountingHoles', 'Arduino_UNO_R2', 'Arduino_UNO_R2_WithMountingHoles', 'Arduino_UNO_R3',
  'Arduino_UNO_R3_WithMountingHoles', 'BeagleBoard_PocketBeagle', 'Carambola2', 'Maple_Mini', 'Onion_Omega2+', 'Onion_Omega2S',
  'Pololu_Breakout-16_15.2x20.3mm', 'Raspberry_Pi_Zero_Sockete...HT_FaceDown', 'ST_Morpho_Connector_144_STLink',
  'ST_Morpho_Connector_144_STLink_MountingHoles', 'Sipeed-M1', 'Texas_EUK_R-PDSS-T7_THT', 'Texas_EUS_R-PDSS-T5_THT', 'Texas_EUW_R-PDSS-T7_THT',
];

function InfoCol({ w, a, b }: { w: string; a: string; b: string }) {
  return <div className={`overflow-hidden whitespace-nowrap leading-[15px] ${w}`}><p>{a}</p><p>{b}</p></div>;
}

function FootprintEditor() {
  return (
    <section className="absolute bottom-[126px] left-[223px] right-[191px] top-[171px] flex flex-col overflow-hidden border border-[#5c5c5c] bg-[#f0f0f0] shadow-[0_4px_18px_2px_rgba(0,0,0,0.4)]">
      <header className="flex h-[30px] shrink-0 items-center bg-white pl-[9px]">
        <Ico size={16}><Pads body="#a9bccb" /></Ico>
        <h1 className="ml-1 flex-1 truncate">Module:Raspberry_Pi_Zero_Socketed_THT_FaceDown_MountingHoles — Редактор посад.мест</h1>
        <WindowButtons color="#000" />
      </header>
      <MenuBar className="h-[19px] shrink-0 pl-2" items={['Файл', 'Правка', 'Вид', 'Разместить', 'Проверить', 'Инструменты', 'Настройки', 'Справка']} />
      <div role="toolbar" className="flex h-[38px] shrink-0 items-center gap-[3px] pl-1 pr-0.5">
        <HTools
          items={['newFp', 'starFp', 'save', '|', 'print', '|', 'undo', 'redo', '|', 'refresh', 'zoomIn', 'zoomOut', 'zoomPage', 'zoomSel', '|', 'rotL', 'rotR', 'mirror', 'group', 'ungroup', '|', 'fpGear', 'padGear', 'check', '|', 'pcbDown', 'fpUp', '|']}
        />
        <Select label="Сетка" value={'Сетка: 2,5400 мм (0,1000 ")'} className="h-[23px] w-[249px] shrink-0" />
        <HTools items={['|']} />
        <Select label="Масштаб" value="Автомасштаб" className="h-[23px] w-[116px] shrink-0" />
        <HTools items={['|']} />
        <Select label="Слой" value="F.Silkscreen" swatch className="h-[23px] min-w-0 flex-1" />
      </div>
      <div className="flex min-h-0 flex-1">
        <div className="w-[38px] shrink-0">
          <VTools
            items={['grid', 'polar', 'u:in', 'u:mil', 'u:mm', 'cursor', '|', 'fpSketch', 'chipSketch', 'textSketch', 'tracks', '|', 'tree', 'layers']}
            active={['grid', 'u:mm', 'tree', 'layers']}
          />
        </div>
        <aside className="flex w-[251px] shrink-0 flex-col border border-[#a5a5a5]">
          <h2 className="flex h-5 shrink-0 items-center bg-[#b9b9b9] pl-0.5">Библиотеки</h2>
          <label className="mx-px flex h-[21px] shrink-0 items-center bg-white pl-1">
            <svg width="14" height="14" viewBox="0 0 14 14" fill="none" aria-hidden="true"><circle cx="5.500" cy="5.500" r="4.500" stroke={D} strokeWidth="1.500" /><path d="M9 9L13 13" stroke={D} strokeWidth="2" /></svg>
            <input aria-label="Фильтр" placeholder="Фильтр" className="ml-1.5 min-w-0 flex-1 bg-transparent outline-none placeholder:text-[#5f5f5f]" />
            <svg width="16" height="16" viewBox="0 0 16 16" fill="none" className="mr-[5px]" aria-hidden="true"><circle cx="8" cy="8" r="7.500" fill="#8a8a8a" /><path d="M5 5L11 11M11 5L5 11" stroke="#fff" strokeWidth="2" /></svg>
          </label>
          <div className="mt-px flex min-h-0 flex-1 flex-col border-t-2 border-[#a5a5a5] bg-white pb-[2px] pr-[3px]">
            <div className="flex min-h-0 flex-1 pl-px">
              <div className="min-w-0 flex-1 overflow-hidden">
                <p className="flex h-[25px] items-center pl-[6px]">Элемент</p>
                <ul>
                  {FOOTPRINTS.map((f, i) => (
                    <li key={f} className={`flex h-[22px] items-center overflow-hidden whitespace-nowrap pl-[39px] ${i === 15 ? 'bg-[#0078d7] text-white' : ''}`}>{f}</li>
                  ))}
                </ul>
              </div>
              <VScroll thumb="mt-[232px] h-[58px]" />
            </div>
            <HScroll thumb="w-[18px]" />
          </div>
        </aside>
        <div className="ml-1 flex min-w-0 flex-1 flex-col border border-[#a5a5a5]">
          <div className="flex min-h-0 flex-1">
            <div className="min-w-0 flex-1"><FootprintCanvas /></div>
            <VScroll thumb="mt-[256px] h-[17px]" />
          </div>
          <HScroll thumb="ml-[309px] w-[17px]" />
        </div>
        <div className="w-[41px] shrink-0">
          <VTools
            items={['arrow', '|', 'pad', 'line', 'arc', 'rect', 'circle', 'poly', 'hatch', 'text', 'del', '|', 'origin', 'gridOrigin', 'ruler']}
            active={['arrow']}
          />
        </div>
        <Appearance selected="F.Silkscreen" thumb="h-[174px]" className="w-[249px]" />
      </div>
      <div className="flex h-[31px] shrink-0 pl-[11px]">
        <InfoCol w="w-[94px]" a="Библиотека" b="Module" />
        <InfoCol w="w-[352px]" a="Имя посад.места" b="Raspberry_Pi_Zero_Socketed_THT_FaceDown_MountingHoles" />
        <InfoCol w="w-[75px]" a="Конт.пл." b="40" />
        <InfoCol w="flex-1" a="Документация: Raspberry Pi Zero using through hole straight pin socket, 2x20, 2.54mm pitch, https://www.raspberrypi.org/documentation" b="Ключевые слова: raspberry pi zero through hole" />
      </div>
      <StatusBar
        className="h-[22px]"
        cells={[['w-[56px]', ''], ['w-[78px]', 'Z 1,55'], ['w-[160px]', 'X 43,1800  Y -25,4000'], ['w-[251px]', 'dx 43,1800  dy -25,4000  dist 50,0966'], ['w-[184px]', 'grid X 2,5400  Y 2,5400'], ['w-[75px]', 'мм'], ['w-[174px]', ''], ['flex-1', '']]}
      />
    </section>
  );
}

function BoardEditor() {
  return (
    <section className="absolute bottom-[84px] left-[165px] right-[145px] top-[142px] flex flex-col overflow-hidden border border-[#9a9a9a] bg-[#f0f0f0] shadow-[0_2px_12px_1px_rgba(0,0,0,0.28)]">
      <header className="flex h-[30px] shrink-0 items-center bg-white pl-2 text-[#999]">
        <PcbArt size={16} />
        <h1 className="ml-[5px] flex-1">NewProject — Редактор печатных плат</h1>
        <WindowButtons color="#8a8a8a" />
      </header>
      <MenuBar className="h-[19px] shrink-0 pl-[7px] text-[#6d6d6d]" items={['Файл', 'Правка', 'Вид']} />
      <div role="toolbar" className="flex h-[38px] shrink-0 items-center gap-[3px] pl-1"><HTools items={['save', '|', 'pcb']} /></div>
      <div className="h-[37px] shrink-0 pl-[5px] pt-[7px]">
        <Select label="Дорожка" value="Дорожка: использовать ширину цепи" className="h-[23px] w-[240px]" />
      </div>
      <div className="flex min-h-0 flex-1">
        <div className="w-[37px] shrink-0">
          <VTools
            items={['grid', 'polar', 'u:in', 'u:mil', 'u:mm', 'cursor', '|', 'ratsnest', 'ratCurved', '|', 'tracks', 'tracksFaded', '|', 'zoneFill', 'zoneOutline', '|', 'fpSketch', 'padSketch', 'crossTracks', '|', 'layers']}
            active={['grid', 'u:mm', 'ratsnest', 'zoneFill', 'layers']}
          />
        </div>
        <div className="mr-10 flex min-w-0 flex-1 flex-col border border-[#a5a5a5]">
          <div className="min-h-0 flex-1 bg-[#001023]" />
          <HScroll thumb="ml-[500px] w-[17px]" />
        </div>
        <Appearance board selected="F.Cu" thumb="h-[220px]" className="w-[180px]" />
      </div>
      <div className="flex h-[29px] shrink-0 pl-[11px] text-[#6d6d6d]">
        <InfoCol w="w-[75px]" a="Конт.пл." b="0" />
        <InfoCol w="w-[87px]" a="Перех.отв." b="0" />
        <InfoCol w="w-[135px]" a="Сегментов дорожек" b="0" />
        <InfoCol w="w-[58px]" a="Цепи" b="0" />
        <InfoCol w="flex-1" a="Не разведено" b="0" />
      </div>
      <StatusBar
        className="h-6"
        cells={[['w-[160px]', ''], ['w-[78px]', 'Z 1,05'], ['w-[160px]', 'X 147,3200  Y 27,9400'], ['w-[251px]', 'dx 147,3200  dy 27,9400  dist 149,9461'], ['w-[185px]', 'grid X 2,5400  Y 2,5400'], ['w-[75px]', 'мм'], ['w-[172px]', ''], ['flex-1', '']]}
      />
    </section>
  );
}

function ProjectTree() {
  return (
    <aside className="flex w-[250px] shrink-0 flex-col">
      <h2 className="flex h-5 shrink-0 items-center bg-[#b9b9b9] pl-[3px] text-[#222]">Файлы проекта</h2>
      <div className="min-h-0 flex-1 border border-[#828790] bg-white pl-3 pt-px">
        <div className="flex h-6 items-center font-bold">
          <span className="flex h-[9px] w-[9px] items-center justify-center border border-[#919191]"><span className="h-px w-[5px] bg-[#44607f]" /></span>
          <span className="mr-px w-2.5 border-t border-dotted border-[#888]" />
          <Notebook size={22} />
          <span className="ml-1.5">NewProject.kicad_pro</span>
        </div>
        {['NewProject.kicad_pcb', 'NewProject.kicad_sch'].map((n, i) => (
          <div key={n} className="ml-[31px] flex h-6 items-center">
            <span className="h-full w-[15px] shrink-0"><span className="block h-1/2 border-b border-l border-dotted border-[#888]" />{i === 0 && <span className="block h-1/2 border-l border-dotted border-[#888]" />}</span>
            {i === 0 ? <PcbArt /> : <SchArt />}
            <button type="button" className={`ml-[3px] h-[23px] pl-[2px] pr-[6px] ${i === 0 ? 'bg-[#f2f2f2]' : ''}`}>{n}</button>
          </div>
        ))}
      </div>
    </aside>
  );
}

export default function App() {
  return (
    <main className="relative flex h-screen w-full flex-col overflow-hidden bg-[#f0f0f0] font-['Open_Sans','Noto_Sans',sans-serif] text-[11px] leading-4 text-black">
      <header className="flex h-6 shrink-0 items-start bg-white pl-0.5 pr-0.5 pt-[3px] text-[#8c8c8c]">
        <KiLogo />
        <h1 className="ml-[5px] flex-1">NewProject — KiCad 6.0</h1>
        <div className="flex">
          <button type="button" aria-label="Свернуть" className="flex h-4 w-[46px] items-center justify-center"><svg width="11" height="11" viewBox="0 0 11 11"><path d="M0 5.500H10" stroke="#8a8a8a" /></svg></button>
          <button type="button" aria-label="Восстановить" className="flex h-4 w-[46px] items-center justify-center"><svg width="11" height="11" viewBox="0 0 11 11" fill="none"><path d="M.5 2.500H8.500V10.500H.5ZM2.500 2.500V.5H10.500V8.500H8.500" stroke="#8a8a8a" /></svg></button>
          <button type="button" aria-label="Закрыть" className="flex h-4 w-[46px] items-center justify-center"><svg width="11" height="11" viewBox="0 0 11 11"><path d="M0 0L10 10M10 0L0 10" stroke="#8a8a8a" /></svg></button>
        </div>
      </header>
      <MenuBar className="h-[19px] shrink-0 pb-0.5 pl-2 text-[#6d6d6d]" items={['Файл', 'Вид', 'Инструменты', 'Настройки', 'Справка']} />
      <div className="flex min-h-0 flex-1">
        <div className="w-[37px] shrink-0"><VTools className="pl-px" items={['newProject', 'open', '|', 'box', 'openBox', '|', 'refresh', '|', 'folderRed']} /></div>
        <ProjectTree />
        <div className="ml-[3px] min-w-0 flex-1 border-l border-[#e2e2e2] pl-[15px] pt-[15px]">
          <button type="button" className="flex items-center gap-[15px] text-left">
            <SchArt size={48} />
            <span>
              <span className="mt-0.5 block text-[14px] font-bold leading-5">Редактор схем</span>
              <span className="block leading-[18px] italic text-[#222]">Редактировать схему</span>
            </span>
          </button>
          <button type="button" className="mt-3 flex items-start gap-[15px] text-left">
            <SymArt />
            <span className="pt-[6px] text-[14px] font-bold leading-5">Редактор символов</span>
          </button>
        </div>
      </div>
      <footer className="flex h-[23px] shrink-0 items-center border-t border-[#d5d5d5] pt-0.5">
        <p className="w-[831px] pl-0.5">{'Проект: C:\\Users\\Admin\\Documents\\Новая папка\\NewProject\\NewProject.kicad_pro'}</p>
        <p className="border-l border-[#d7d7d7] pl-[3px]">Локальный каталог: изменения отслеживаются</p>
      </footer>
      <BoardEditor />
      <FootprintEditor />
    </main>
  );
}
